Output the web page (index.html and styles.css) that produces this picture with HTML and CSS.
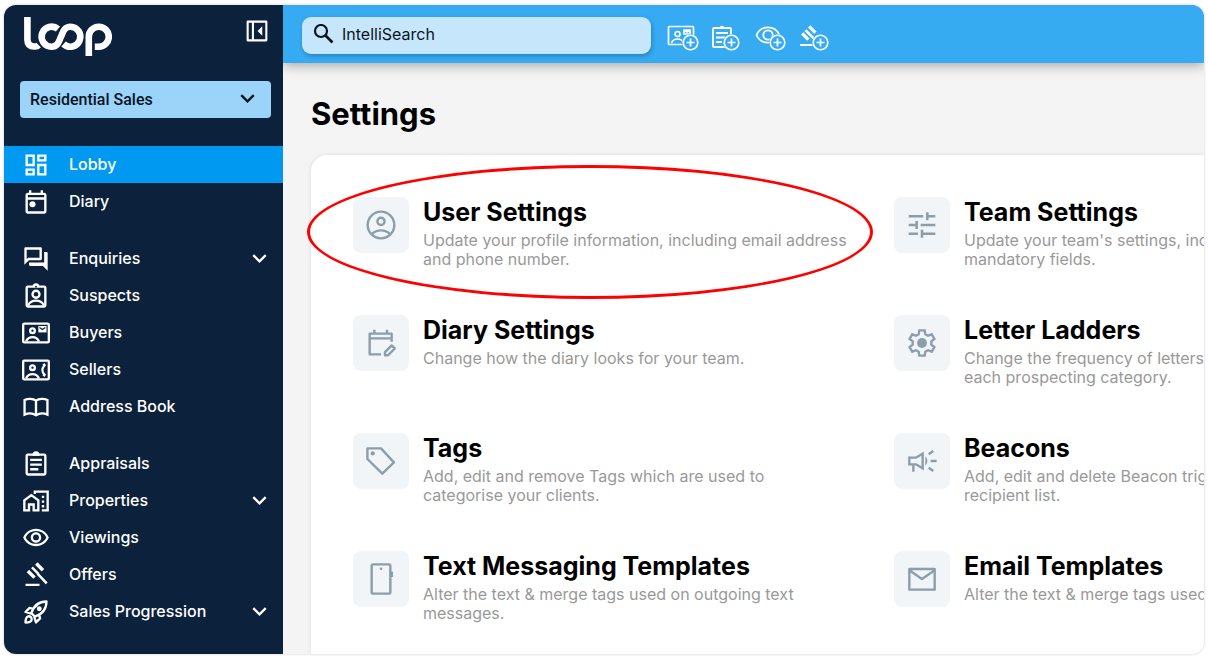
FILE: index.html
```html
<!DOCTYPE html>
<html lang="en">
<head>
<meta charset="utf-8">
<title>Loop – Settings</title>
<link rel="stylesheet" href="styles.css">
</head>
<body>
<svg class="sprite" aria-hidden="true">
  <symbol id="i-chevron" viewBox="0 0 24 24"><path d="M5.500 8.500l6.500 6.500L18.500 8.500" fill="none" stroke="currentColor" stroke-width="2.400"/></symbol>
  <symbol id="i-dashboard" viewBox="0 0 24 24"><path d="M19 5v2h-4V5h4M9 5v6H5V5h4m10 8v6h-4v-6h4M9 17v2H5v-2h4M21 3h-8v6h8V3zM11 3H3v10h8V3zm10 8h-8v10h8V11zm-10 4H3v6h8v-6z"/></symbol>
  <symbol id="i-diary" viewBox="0 0 24 24"><path d="M19 4h-1V2h-2v2H8V2H6v2H5c-1.1 0-2 .9-2 2v14c0 1.100.9 2 2 2h14c1.100 0 2-.9 2-2V6c0-1.100-.9-2-2-2zm0 16H5V10h14v10zm0-12H5V6h14v2z"/><circle cx="9" cy="14" r="2.600"/></symbol>
  <symbol id="i-forum" viewBox="0 0 24 24"><path d="M15 4v7H5.170L4 12.170V4h11m1-2H3c-.55 0-1 .45-1 1v14l4-4h10c.55 0 1-.45 1-1V3c0-.55-.45-1-1-1zm5 4h-2v9H6v2c0 .55.45 1 1 1h11l4 4V7c0-.55-.45-1-1-1z"/></symbol>
  <symbol id="i-suspect" viewBox="0 0 24 24"><g fill="none" stroke="currentColor" stroke-width="2"><rect x="4" y="4" width="16" height="17" rx="1"/><circle cx="12" cy="10.500" r="3"/><path d="M5 20c2-3.300 4.500-4 7-4s5 .7 7 4"/></g><path d="M9 4a3 3 0 0 1 6 0z"/><circle cx="12" cy="4" r=".8" fill="#0c213c"/></symbol>
  <symbol id="i-buyer" viewBox="0 0 24 24"><g fill="none" stroke="currentColor" stroke-width="2"><rect x="1" y="4" width="22" height="16" rx="1"/><circle cx="9" cy="10" r="2"/><path d="M3.500 19c1.300-2.700 3.300-3.500 5.500-3.500s4.200.8 5.500 3.500"/></g><path d="M14 6h7v5.500h-7z"/><path d="M15 7.300l2.500 1.700L20 7.300" fill="none" stroke="#0c213c"/></symbol>
  <symbol id="i-seller" viewBox="0 0 24 24"><g fill="none" stroke="currentColor" stroke-width="2"><rect x="1" y="4" width="22" height="16" rx="1"/><circle cx="9" cy="10" r="2"/><path d="M3.500 19c1.300-2.700 3.300-3.500 5.500-3.500s4.200.8 5.500 3.500"/></g><path d="M19 8.200c-2 2.500-2 5.100 0 7.600" fill="none" stroke="currentColor" stroke-width="1.800"/><path d="M17.500 7.500l1.700-1.500 1.400 2-1.500 1.700zM17.500 16.500l1.700 1.500 1.400-2-1.500-1.700z"/></symbol>
  <symbol id="i-book" viewBox="0 0 24 24"><path d="M12 6.500C9.500 4.600 5 4.600 2.200 6v12.500c3-1.300 7-1.300 9.800.5 2.800-1.800 6.800-1.800 9.800-.5V6C19 4.600 14.500 4.600 12 6.500zM12 6.500V19" fill="none" stroke="currentColor" stroke-width="2"/></symbol>
  <symbol id="i-clipboard" viewBox="0 0 24 24"><rect x="4" y="4" width="16" height="17" rx="1" fill="none" stroke="currentColor" stroke-width="2"/><path d="M9 4a3 3 0 0 1 6 0v1H9zM7 7.500h10v2H7zM7 11.500h10v2H7zM7 15.500h7v2H7z"/></symbol>
  <symbol id="i-home" viewBox="0 0 24 24"><g fill="none" stroke="currentColor" stroke-width="2"><path d="M2 20v-8.500L8 7l6 4.500V20h-4v-5H6v5zM11 6V4h11v16h-5"/></g><path d="M17 7.500h2v2h-2zM17 11.500h2v2h-2zM17 15.500h2v2h-2z"/></symbol>
  <symbol id="i-eye" viewBox="0 0 24 24"><path d="M12 6a9.770 9.770 0 0 1 8.820 5.500C19.170 14.870 15.790 17 12 17s-7.170-2.130-8.820-5.500A9.770 9.770 0 0 1 12 6m0-2C7 4 2.730 7.110 1 11.500 2.730 15.890 7 19 12 19s9.270-3.110 11-7.500C21.270 7.110 17 4 12 4zm0 5a2.500 2.500 0 0 1 0 5 2.500 2.500 0 0 1 0-5m0-2c-2.480 0-4.500 2.020-4.500 4.500S9.520 16 12 16s4.500-2.020 4.500-4.500S14.480 7 12 7z"/></symbol>
  <symbol id="i-gavel" viewBox="0 0 24 24"><path d="M3 19.500h12v2H3zM11.200 3.200l2.100-2.100 5.700 5.700-2.100 2.100zM4 9.600l2.100-2.100 5.700 5.700-2.100 2.100zM7.800 6.200l1.500-1.500 5.700 5.700-1.500 1.500zM12.500 11.500l1.500-1.500 8 8.500-1.600 1.500z"/></symbol>
  <symbol id="i-rocket" viewBox="0 0 24 24"><g fill="none" stroke="currentColor" stroke-width="2" stroke-linejoin="round"><path d="M8 13c2-6 6-10 13-10 0 7-4 11-10 13zM9.500 9.300L6.500 8.500 3 12l5 1.500M14.700 14.500l.8 3L12 21l-1.500-5"/><path d="M3 21c0-3 .5-4.500 2-5.200 1.800-.8 4 1.400 3.200 3.200C7.500 20.500 6 21 3 21z"/></g><circle cx="14.800" cy="9.200" r="2.100"/></symbol>
  <symbol id="i-search" viewBox="0 0 24 24"><circle cx="9" cy="9" r="6" fill="none" stroke="currentColor" stroke-width="2.200"/><path d="M13.500 13.500l7 7" stroke="currentColor" stroke-width="2.600"/></symbol>
  <symbol id="i-collapse" viewBox="0 0 24 24"><path d="M4 4h16v16H4zM8.500 4v16" fill="none" stroke="currentColor" stroke-width="1.800" stroke-linejoin="round"/><path d="M16.500 8v8l-4-4z"/></symbol>
  <symbol id="i-user" viewBox="0 0 24 24"><g fill="none" stroke="currentColor" stroke-width="1.800"><circle cx="12" cy="12" r="10"/><circle cx="12" cy="9.300" r="2.700"/><path d="M5.500 18.500c3.500-3.300 9.500-3.300 13 0"/></g></symbol>
  <symbol id="i-tune" viewBox="0 0 24 24"><path d="M2 5.500h11M16 5.500h6M16 2.500v6M2 12h4M11 12h11M8 9v6M2 18.500h7M12 18.500h10M12 15.500v6M16 5.500h1M6 12h2" stroke="currentColor" stroke-width="1.900"/></symbol>
  <symbol id="i-edit-cal" viewBox="0 0 24 24"><path d="M12 20.500H3.500V5h16.500v6M3.500 8.500h16.500M7 5V2M16.500 5V2" fill="none" stroke="currentColor" stroke-width="1.800" stroke-linejoin="round"/><path d="M15 21.200v-2.400l5-5 2.300 2.300-5 5.100z" fill="none" stroke="currentColor" stroke-width="1.800" stroke-linejoin="round"/></symbol>
  <symbol id="i-gear" viewBox="0 0 24 24"><path d="M10 2.500h4l.5 3 2 1.100 2.800-1.100 2 3.500-2.300 1.800v2.400l2.300 1.800-2 3.500-2.800-1.100-2 1.100-.5 3h-4l-.5-3-2-1.100-2.800 1.100-2-3.500L5 13.200v-2.400L2.700 9l2-3.500 2.800 1.100 2-1.100z" fill="none" stroke="currentColor" stroke-width="1.800"/><circle cx="12" cy="12" r="3.700"/></symbol>
  <symbol id="i-tag" viewBox="0 0 24 24"><path d="M1.800 2.500v8L13 21.500l8.700-8.500L12 2.500z" fill="none" stroke="currentColor" stroke-width="1.800" stroke-linejoin="round"/><circle cx="5.800" cy="6.300" r="1.600"/></symbol>
  <symbol id="i-horn" viewBox="0 0 24 24"><path d="M2.500 9.500h5l5-3v11l-5-3h-5zM5.500 15v5M18.500 12h4.500M17 7l3.500-2.500M17 17l3.500 2.500" fill="none" stroke="currentColor" stroke-width="1.800"/><path d="M14.500 8.500c2 2 2 5 0 7z"/></symbol>
  <symbol id="i-phone" viewBox="0 0 24 24"><rect x="5" y="1" width="14" height="22" rx="1" fill="none" stroke="currentColor" stroke-width="1.800"/><circle cx="12" cy="4.300" r="1"/><path d="M19.500 7h1v3h-1z" stroke="currentColor"/></symbol>
  <symbol id="i-mail" viewBox="0 0 24 24"><path d="M2.500 4.500h19v15.500h-19zM2.500 5.500L12 12l9.500-6.500" fill="none" stroke="currentColor" stroke-width="1.800" stroke-linejoin="round"/></symbol>
  <symbol id="i-add-contact" viewBox="0 0 32 28"><g fill="none" stroke="currentColor" stroke-width="1.700"><rect x="1.500" y="2.500" width="25" height="18" rx="1"/><circle cx="10.500" cy="10" r="2.500"/><path d="M4.500 19c1-3 3-4 6-4s5 1 6 4"/><path d="M17 6h6v4h-6zl3 2 3-2"/></g></symbol>
  <symbol id="i-add-clip" viewBox="0 0 32 28"><g fill="none" stroke="currentColor" stroke-width="1.800"><rect x="2" y="4" width="18" height="19" rx="1"/><path d="M5 9h12M5 13.500h12M5 18h6"/></g><path d="M7 5V3h2a2.200 2.200 0 0 1 4 0h2v2z"/></symbol>
  <symbol id="i-add-eye" viewBox="0 0 32 28"><g fill="none" stroke="currentColor" stroke-width="1.800"><path d="M1.500 11C6 .8 20 .8 24.500 11 20 21.200 6 21.200 1.500 11z"/><circle cx="13" cy="11" r="4.700"/></g></symbol>
  <symbol id="i-add-gavel" viewBox="0 0 32 28"><path d="M1 20h14v2H1zM9 3.500l2.300-2.300 6.200 6.200-2.300 2.300zM2 10.500l2.300-2.300 6.200 6.200-2.300 2.300zM5.500 7.200L7.500 5.200 18 15.900l-1.700 1.700z"/></symbol>
  <symbol id="i-plus" viewBox="0 0 32 28"><circle cx="23.500" cy="18.500" r="8.600" fill="#36abf2"/><circle cx="23.500" cy="18.500" r="7.300" fill="none" stroke="currentColor" stroke-width="1.600"/><path d="M23.500 14.500v8M19.500 18.500h8" stroke="currentColor" stroke-width="1.700"/></symbol>
</svg>

<div class="app">
  <aside class="sidebar">
    <div class="brand">
      <svg class="logo" viewBox="0 0 88 39" role="img" aria-label="loop"><g fill="none" stroke="#fff" stroke-width="6.600"><path d="M3.400 0v22.500q0 7 7 7h1q1.800 0 3.300-1.400"/><path d="M34 12A10 10 0 1 0 27.500 29.700C34 29.700 35 24 37 19.700S40 9.700 46.500 9.700A10 10 0 1 1 39.500 27"/><path d="M64.800 39V19.700a10 10 0 1 1 10 10h-4"/></g></svg>
      <button class="icon-button" aria-label="Collapse menu"><svg class="icon"><use href="#i-collapse"/></svg></button>
    </div>
    <div class="select-wrap">
      <select class="dept" aria-label="Department"><option>Residential Sales</option></select>
      <svg class="select-chevron" aria-hidden="true"><use href="#i-chevron"/></svg>
    </div>
    <nav class="nav">
      <div class="group">
        <a class="nav-item active" href="#"><svg class="icon"><use href="#i-dashboard"/></svg><span>Lobby</span></a>
        <a class="nav-item" href="#"><svg class="icon"><use href="#i-diary"/></svg><span>Diary</span></a>
      </div>
      <div class="group">
        <a class="nav-item" href="#"><svg class="icon"><use href="#i-forum"/></svg><span>Enquiries</span><svg class="chev"><use href="#i-chevron"/></svg></a>
        <a class="nav-item" href="#"><svg class="icon"><use href="#i-suspect"/></svg><span>Suspects</span></a>
        <a class="nav-item" href="#"><svg class="icon"><use href="#i-buyer"/></svg><span>Buyers</span></a>
        <a class="nav-item" href="#"><svg class="icon"><use href="#i-seller"/></svg><span>Sellers</span></a>
        <a class="nav-item" href="#"><svg class="icon"><use href="#i-book"/></svg><span>Address Book</span></a>
      </div>
      <div class="group">
        <a class="nav-item" href="#"><svg class="icon"><use href="#i-clipboard"/></svg><span>Appraisals</span></a>
        <a class="nav-item" href="#"><svg class="icon"><use href="#i-home"/></svg><span>Properties</span><svg class="chev"><use href="#i-chevron"/></svg></a>
        <a class="nav-item" href="#"><svg class="icon"><use href="#i-eye"/></svg><span>Viewings</span></a>
        <a class="nav-item" href="#"><svg class="icon"><use href="#i-gavel"/></svg><span>Offers</span></a>
        <a class="nav-item" href="#"><svg class="icon"><use href="#i-rocket"/></svg><span>Sales Progression</span><svg class="chev"><use href="#i-chevron"/></svg></a>
      </div>
    </nav>
  </aside>

  <div class="content">
    <header class="topbar">
      <label class="search"><svg class="search-icon" aria-hidden="true"><use href="#i-search"/></svg><input type="text" placeholder="IntelliSearch" aria-label="IntelliSearch"></label>
      <div class="actions">
        <button class="action" aria-label="Add contact"><svg><use href="#i-add-contact"/><use href="#i-plus"/></svg></button>
        <button class="action" aria-label="Add appraisal"><svg><use href="#i-add-clip"/><use href="#i-plus" x="-3"/></svg></button>
        <button class="action" aria-label="Add viewing"><svg><use href="#i-add-eye"/><use href="#i-plus" x="-1"/></svg></button>
        <button class="action" aria-label="Add offer"><svg><use href="#i-add-gavel"/><use href="#i-plus" x="-2"/></svg></button>
      </div>
    </header>
    <main class="page">
      <h1>Settings</h1>
      <section class="panel">
        <a class="card" href="#"><span class="tile"><svg><use href="#i-user"/></svg></span><div><h2>User Settings</h2><p>Update your profile information, including email address and phone number.</p></div><span class="ring"></span></a>
        <a class="card" href="#"><span class="tile"><svg><use href="#i-tune"/></svg></span><div><h2>Team Settings</h2><p>Update your team's settings, including all your mandatory fields.</p></div></a>
        <a class="card" href="#"><span class="tile"><svg><use href="#i-edit-cal"/></svg></span><div><h2>Diary Settings</h2><p>Change how the diary looks for your team.</p></div></a>
        <a class="card" href="#"><span class="tile"><svg><use href="#i-gear"/></svg></span><div><h2>Letter Ladders</h2><p>Change the frequency of letters that are sent out for each prospecting category.</p></div></a>
        <a class="card" href="#"><span class="tile"><svg><use href="#i-tag"/></svg></span><div><h2>Tags</h2><p>Add, edit and remove Tags which are used to categorise your clients.</p></div></a>
        <a class="card" href="#"><span class="tile"><svg><use href="#i-horn"/></svg></span><div><h2>Beacons</h2><p>Add, edit and delete Beacon triggers and manage recipient list.</p></div></a>
        <a class="card" href="#"><span class="tile"><svg><use href="#i-phone"/></svg></span><div><h2>Text Messaging Templates</h2><p>Alter the text &amp; merge tags used on outgoing text messages.</p></div></a>
        <a class="card" href="#"><span class="tile"><svg><use href="#i-mail"/></svg></span><div><h2>Email Templates</h2><p>Alter the text &amp; merge tags used on emails.</p></div></a>
      </section>
    </main>
  </div>
</div>
</body>
</html>
```
FILE: styles.css
```css
* { box-sizing: border-box; }
body {
  margin: 0;
  padding: 5px 4px 4px;
  height: 100vh;
  background: #fff;
  font-family: Inter, "Liberation Sans", sans-serif;
  overflow: hidden;
}
svg { fill: currentColor; flex: none; }
.sprite { position: absolute; width: 0; height: 0; }
a { color: inherit; text-decoration: none; }
button { border: 0; padding: 0; background: none; color: inherit; display: flex; }

.app {
  display: flex;
  height: 100%;
  border-radius: 12px;
  overflow: hidden;
  background: #f4f4f4;
  box-shadow: 0 0 3px rgba(0, 0, 0, .2);
}

.sidebar { flex: none; width: 279px; background: #0c213c; color: #fff; }
.brand { display: flex; justify-content: space-between; padding: 12px 12px 0 20px; height: 76px; }
.logo { width: 88px; height: 39px; }
.icon { width: 28px; height: 28px; }
.icon-button { align-self: flex-start; }

.select-wrap { position: relative; margin: 0 12px 28px 16px; }
.dept {
  appearance: none;
  width: 100%;
  height: 37px;
  padding: 0 10px 1px;
  border: 0;
  border-radius: 4px;
  background: #9bd3f9;
  color: #07131f;
  font: 500 16px Roboto, sans-serif;
}
.select-chevron { position: absolute; right: 12px; top: 6px; width: 23px; height: 23px; color: #07131f; pointer-events: none; }

.group { margin-bottom: 20px; }
.nav-item { display: flex; align-items: center; height: 37px; padding: 0 12px 0 18px; font-size: 16px; font-weight: 500; }
.nav-item span { flex: 1; padding: 0 0 1px 19px; }
.nav-item.active { background: #0099f2; }
.chev { width: 23px; height: 23px; }

.content { flex: 1; min-width: 0; overflow: hidden; }
.topbar {
  display: flex;
  align-items: center;
  gap: 16px;
  height: 58px;
  padding: 2px 19px 0;
  background: #36abf2;
  box-shadow: 0 2px 12px rgba(0, 0, 0, .35);
  color: #fff;
}
.search {
  display: flex;
  align-items: center;
  width: 349px;
  height: 37px;
  padding: 0 10px 2px;
  border-radius: 9px;
  background: #c6e6fb;
  box-shadow: 1px 2px 4px rgba(0, 40, 80, .3);
  color: #0a1520;
}
.search-icon { width: 24px; height: 24px; }
.search input { flex: 1; min-width: 0; border: 0; outline: 0; padding: 0 6px; background: none; font: 16px Inter, sans-serif; }
.search input::placeholder { color: #0a1520; opacity: 1; }
.actions { display: flex; gap: 12px; padding-top: 5px; }
.action svg { width: 32px; height: 28px; }

.page { padding: 31px 0 0 28px; }
h1 { margin: 0 0 21px; font-size: 31px; line-height: 40px; font-weight: 700; color: #000; }
.panel {
  display: grid;
  grid-template-columns: repeat(2, 541px);
  grid-auto-rows: 118px;
  width: max-content;
  padding: 42px;
  border-radius: 16px;
  background: #fff;
  box-shadow: 0 0 4px rgba(0, 0, 0, .1);
}
.card { position: relative; display: flex; gap: 14px; align-items: flex-start; }
.card div { width: 425px; }
.tile { display: flex; align-items: center; justify-content: center; width: 56px; height: 56px; border-radius: 8px; background: #f1f5f8; color: #8a9eab; flex: none; }
.tile svg { width: 32px; height: 32px; }
h2 { margin: 0 0 4px; font-size: 25px; line-height: 30px; font-weight: 700; color: #000; }
p { margin: 0; font-size: 16px; line-height: 19px; font-weight: 400; color: #999; }
.ring { position: absolute; left: -46px; top: -32px; width: 566px; height: 134px; border: 3px solid #f00; border-radius: 50%; }
```
